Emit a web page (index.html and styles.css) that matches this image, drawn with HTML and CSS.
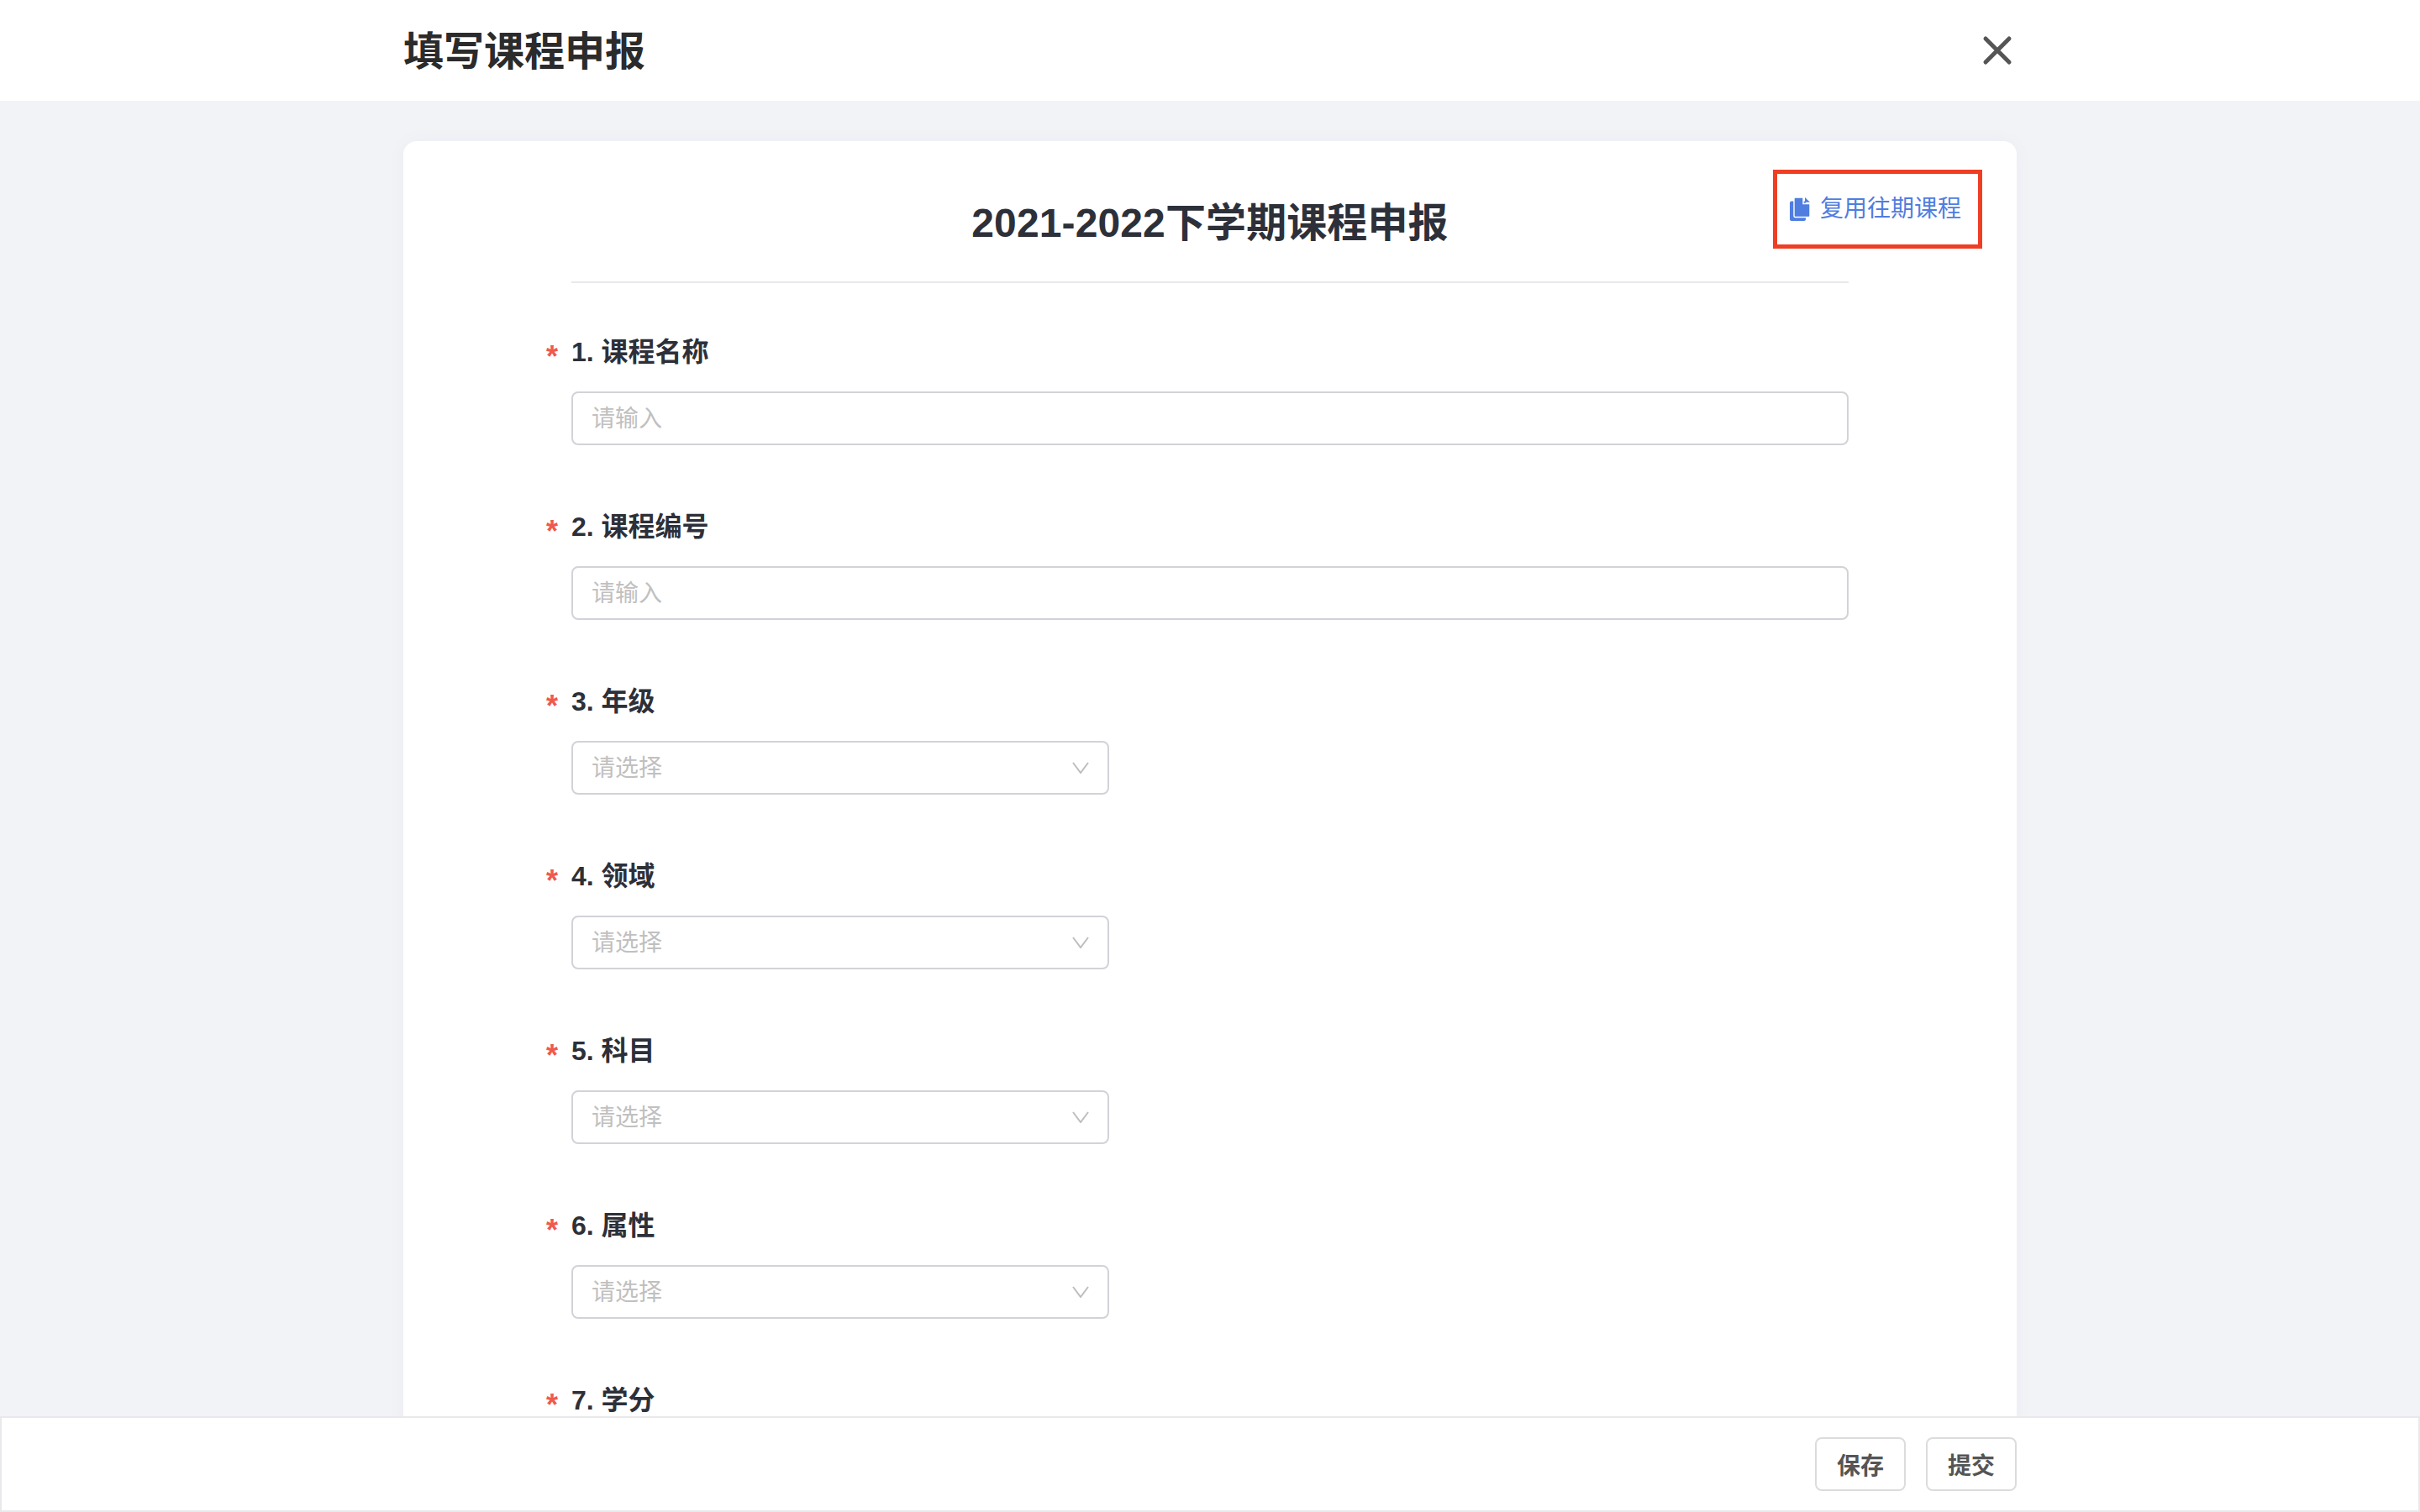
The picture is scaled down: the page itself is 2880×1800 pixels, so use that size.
FILE: index.html
```html
<!DOCTYPE html>
<html lang="zh-CN">
<head>
<meta charset="utf-8">
<title>填写课程申报</title>
<link rel="stylesheet" href="styles.css">
</head>
<body>
<div class="app">
  <header class="topbar">
    <h1 class="topbar-title">填写课程申报</h1>
    <button class="close" type="button" aria-label="关闭">
      <svg viewBox="0 0 48 48" width="48" height="48"><path d="M11 10 L39 38 M39 10 L11 38" fill="none" stroke="#555" stroke-width="5" stroke-linecap="round"/></svg>
    </button>
  </header>
  <main class="content">
    <section class="card">
      <div class="reuse-highlight">
        <a class="reuse-link">
          <svg class="reuse-icon" viewBox="0 0 24 28" width="24" height="28">
            <path d="M2 4.500h15a2 2 0 0 1 2 2V26a2 2 0 0 1-2 2H2a2 2 0 0 1-2-2V6.500a2 2 0 0 1 2-2z" fill="#4f7de0"/>
            <path d="M6.500 0H16v7.500h8V22a1.500 1.500 0 0 1-1.500 1.500H6.500A1.500 1.500 0 0 1 5 22V1.500A1.500 1.500 0 0 1 6.500 0z" fill="#4f7de0" stroke="#fff" stroke-width="1.400"/>
            <path d="M18 0l6 5.800h-6z" fill="#4f7de0"/>
          </svg>
          <span>复用往期课程</span>
        </a>
      </div>
      <div class="form">
        <h2 class="form-title">2021-2022下学期课程申报</h2>
        <div class="field">
          <label class="field-label">1. 课程名称</label>
          <div class="control"><span class="placeholder">请输入</span></div>
        </div>
        <div class="field">
          <label class="field-label">2. 课程编号</label>
          <div class="control"><span class="placeholder">请输入</span></div>
        </div>
        <div class="field">
          <label class="field-label">3. 年级</label>
          <div class="control select"><span class="placeholder">请选择</span><svg class="chevron" viewBox="0 0 20 14" width="20" height="14"><path d="M1 1 L10 13 L19 1" fill="none" stroke="#bdbdbd" stroke-width="2"/></svg></div>
        </div>
        <div class="field">
          <label class="field-label">4. 领域</label>
          <div class="control select"><span class="placeholder">请选择</span><svg class="chevron" viewBox="0 0 20 14" width="20" height="14"><path d="M1 1 L10 13 L19 1" fill="none" stroke="#bdbdbd" stroke-width="2"/></svg></div>
        </div>
        <div class="field">
          <label class="field-label">5. 科目</label>
          <div class="control select"><span class="placeholder">请选择</span><svg class="chevron" viewBox="0 0 20 14" width="20" height="14"><path d="M1 1 L10 13 L19 1" fill="none" stroke="#bdbdbd" stroke-width="2"/></svg></div>
        </div>
        <div class="field">
          <label class="field-label">6. 属性</label>
          <div class="control select"><span class="placeholder">请选择</span><svg class="chevron" viewBox="0 0 20 14" width="20" height="14"><path d="M1 1 L10 13 L19 1" fill="none" stroke="#bdbdbd" stroke-width="2"/></svg></div>
        </div>
        <div class="field">
          <label class="field-label">7. 学分</label>
        </div>
      </div>
    </section>
  </main>
  <footer class="footer">
    <button class="btn" type="button">保存</button>
    <button class="btn" type="button">提交</button>
  </footer>
</div>
</body>
</html>
```
FILE: styles.css
```css
* { box-sizing: border-box; }
html, body { margin: 0; padding: 0; height: 100%; }
body {
  font-family: "Liberation Sans", "Noto Sans CJK SC", sans-serif;
  background: #f2f3f7;
  overflow: hidden;
}
.app { display: flex; flex-direction: column; height: 1800px; }
.topbar {
  flex: none;
  height: 120px;
  background: #fff;
  padding: 0 480px;
  display: flex;
  align-items: center;
  justify-content: space-between;
}
.topbar-title { margin: 4px 0 0; font-size: 48px; line-height: 64px; font-weight: 700; color: #2b2b2b; }
.close { width: 48px; height: 48px; padding: 0; border: 0; background: none; display: block; }
.close svg { display: block; }
.content {
  flex: 1;
  min-height: 0;
  overflow: hidden;
  padding: 48px 480px 0;
}
.card {
  position: relative;
  background: #fff;
  border-radius: 16px;
  box-shadow: 0 0 24px rgba(40, 50, 90, 0.03);
  padding: 0 200px 60px;
}
.reuse-highlight {
  position: absolute;
  left: 1630px;
  top: 34px;
  width: 249px;
  height: 94px;
  border: 5px solid #ee3f24;
  display: flex;
  align-items: center;
  padding-left: 15px;
}
.reuse-link { display: flex; align-items: center; gap: 12px; color: #4f7de0; font-size: 28px; line-height: 36px; white-space: nowrap; }
.reuse-icon { display: block; flex: none; }
.form-title {
  margin: 0;
  height: 169px;
  padding-top: 63px;
  border-bottom: 2px solid #e8e8ec;
  text-align: center;
  font-size: 48px;
  line-height: 70px;
  font-weight: 700;
  letter-spacing: 0.12px;
  color: #2d3039;
}
.field { margin-top: 72px; }
.form-title + .field { margin-top: 57px; }
.field-label {
  display: flex;
  align-items: center;
  height: 44px;
  padding-top: 6px;
  line-height: 38px;
  margin-bottom: 28px;
  font-size: 32px;
  font-weight: 700;
  color: #2d3039;
}
.field-label::before {
  content: "*";
  align-self: flex-start;
  width: 30px;
  margin-left: -30px;
  margin-top: 9px;
  font-size: 36px;
  line-height: 32px;
  font-weight: 700;
  color: #f0594f;
}
.control {
  height: 64px;
  border: 2px solid #d2d3d8;
  border-radius: 8px;
  display: flex;
  align-items: center;
  justify-content: space-between;
  padding: 0 22px 4px 22px;
  background: #fff;
}
.select { width: 640px; }
.placeholder { font-size: 28px; color: #c0c0c0; }
.chevron { display: block; margin-top: 4px; }
.footer {
  flex: none;
  height: 114px;
  background: #fff;
  border: 2px solid #e9e9ec;
  padding: 0 478px 0 0;
  display: flex;
  align-items: center;
  justify-content: flex-end;
  gap: 24px;
}
.btn {
  width: 108px;
  height: 64px;
  padding: 0;
  background: #fff;
  border: 2px solid #dcdcdc;
  border-radius: 8px;
  font-family: inherit;
  font-size: 28px;
  font-weight: 700;
  color: #555;
}
```
